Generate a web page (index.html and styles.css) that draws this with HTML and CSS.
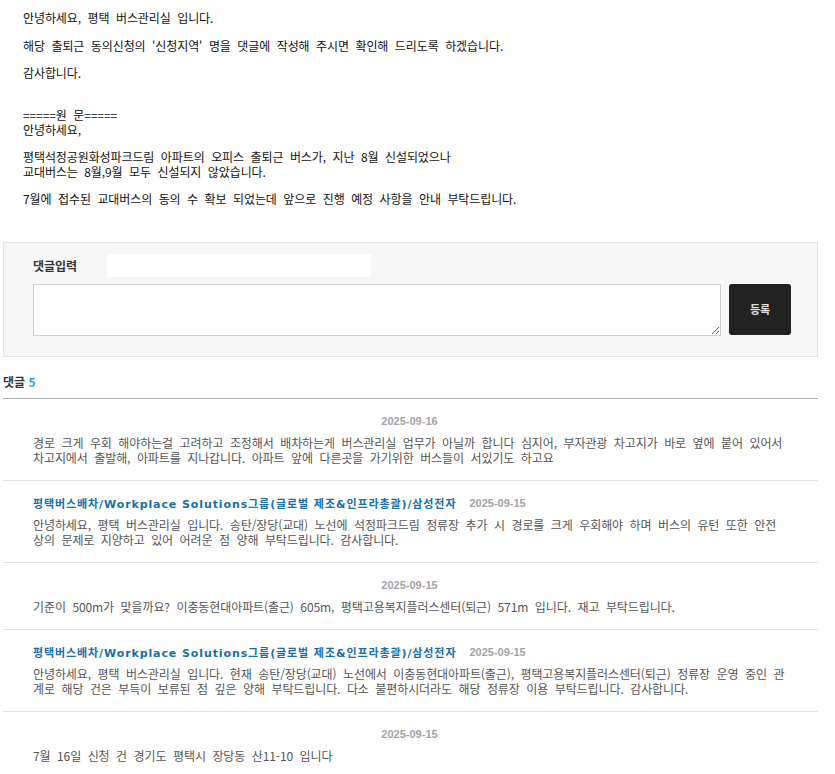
FILE: index.html
```html
<!DOCTYPE html>
<html lang="ko">

<head>
    <meta charset="UTF-8">
    <meta name="viewport" content="width=device-width, initial-scale=1.0">
    <title>출퇴근 동의신청</title>
    <link rel="stylesheet" href="styles.css">
</head>

<body>
    <div class="wrap">
        <div class="post-body">
            <p>안녕하세요, 평택 버스관리실 입니다.</p>
            <p>해당 출퇴근 동의신청의 '신청지역' 명을 댓글에 작성해 주시면 확인해 드리도록 하겠습니다.</p>
            <p>감사합니다.</p>
            <p><br>=====원 문=====<br>안녕하세요,</p>
            <p>평택석정공원화성파크드림 아파트의 오피스 출퇴근 버스가, 지난 8월 신설되었으나<br>교대버스는 8월,9월 모두 신설되지 않았습니다.</p>
            <p>7월에 접수된 교대버스의 동의 수 확보 되었는데 앞으로 진행 예정 사항을 안내 부탁드립니다.</p>
        </div>

        <form class="reply-form" onsubmit="return false">
            <div class="reply-top">
                <label for="reply-text">댓글입력</label>
                <input type="text" class="reply-name">
            </div>
            <div class="reply-row">
                <textarea id="reply-text"></textarea>
                <button type="submit">등록</button>
            </div>
        </form>

        <h3 class="cmt-head">댓글 <span class="cnt">5</span></h3>

        <ul class="cmt-list">
            <li class="cmt anon">
                <div class="cmt-info"><span class="date">2025-09-16</span></div>
                <div class="cmt-text">경로 크게 우회 해야하는걸 고려하고 조정해서 배차하는게 버스관리실 업무가 아닐까 합니다 심지어, 부자관광 차고지가 바로 옆에 붙어 있어서 차고지에서 출발해, 아파트를 지나갑니다. 아파트 앞에 다른곳을 가기위한 버스들이 서있기도 하고요</div>
            </li>
            <li class="cmt">
                <div class="cmt-info"><span class="name">평택버스배차/Workplace Solutions그룹(글로벌 제조&amp;인프라총괄)/삼성전자</span><span class="date">2025-09-15</span></div>
                <div class="cmt-text">안녕하세요, 평택 버스관리실 입니다. 송탄/장당(교대) 노선에 석정파크드림 정류장 추가 시 경로를 크게 우회해야 하며 버스의 유턴 또한 안전상의 문제로 지양하고 있어 어려운 점 양해 부탁드립니다. 감사합니다.</div>
            </li>
            <li class="cmt anon">
                <div class="cmt-info"><span class="date">2025-09-15</span></div>
                <div class="cmt-text">기준이 500m가 맞을까요? 이충동현대아파트(출근) 605m, 평택고용복지플러스센터(퇴근) 571m 입니다. 재고 부탁드립니다.</div>
            </li>
            <li class="cmt">
                <div class="cmt-info"><span class="name">평택버스배차/Workplace Solutions그룹(글로벌 제조&amp;인프라총괄)/삼성전자</span><span class="date">2025-09-15</span></div>
                <div class="cmt-text">안녕하세요, 평택 버스관리실 입니다. 현재 송탄/장당(교대) 노선에서 이충동현대아파트(출근), 평택고용복지플러스센터(퇴근) 정류장 운영 중인 관계로 해당 건은 부득이 보류된 점 깊은 양해 부탁드립니다. 다소 불편하시더라도 해당 정류장 이용 부탁드립니다. 감사합니다.</div>
            </li>
            <li class="cmt anon">
                <div class="cmt-info"><span class="date">2025-09-15</span></div>
                <div class="cmt-text">7월 16일 신청 건 경기도 평택시 장당동 산11-10 입니다</div>
            </li>
        </ul>
    </div>
</body>

</html>
```

FILE: styles.css
```css
html,
body {
    margin: 0;
    padding: 0;
    background: #fff;
    font-family: "Noto Sans CJK KR", "Noto Sans", sans-serif;
    font-size: 12px;
    color: #111;
}

* {
    box-sizing: border-box;
}

.wrap {
    width: 815px;
    margin-left: 3px;
}

/* POST BODY */
.post-body {
    padding: 11px 20px 0;
    letter-spacing: -0.1px;
    word-spacing: 3.3px;
}

.post-body p {
    margin: 0 0 13px;
    line-height: 14.5px;
}

/* REPLY FORM */
.reply-form {
    margin-top: 35px;
    padding: 11px 26px 20px 29px;
    background: #f7f7f7;
    border: 1px solid #e2e2e2;
}

.reply-top {
    display: flex;
    align-items: center;
    height: 23px;
}

.reply-top label {
    width: 74px;
    font-weight: bold;
    color: #333;
}

.reply-name {
    width: 264px;
    height: 23px;
    border: 0;
    background: #fff;
    outline: 0;
}

.reply-row {
    display: flex;
    gap: 8px;
    margin-top: 7px;
}

.reply-row textarea {
    width: 688px;
    height: 52px;
    margin: 0;
    border: 1px solid #cfcfcf;
    background: #fff;
    font-family: inherit;
}

.reply-row button {
    width: 62px;
    height: 51px;
    border: 0;
    border-radius: 3px;
    background: #222;
    color: #ddd;
    font-family: inherit;
    font-size: 11px;
    font-weight: bold;
}

/* COMMENTS */
.cmt-head {
    margin: 17px 0 0;
    padding-bottom: 8px;
    line-height: 16px;
    font-size: 12px;
    font-weight: bold;
    color: #333;
    border-bottom: 1px solid #b4b4b4;
}

.cmt-head .cnt {
    color: #2a9be0;
}

.cmt-list {
    list-style: none;
    margin: 0;
    padding: 0;
}

.cmt {
    padding: 14px 32px 15px 30px;
    border-bottom: 1px solid #e4e4e4;
}

.cmt-info {
    display: flex;
    align-items: center;
    gap: 13px;
    height: 16px;
    margin-bottom: 6px;
}

.cmt.anon .cmt-info {
    justify-content: center;
}

.cmt-info .name {
    font-family: "DejaVu Sans", "Noto Sans CJK KR", sans-serif;
    font-size: 11px;
    font-weight: bold;
    letter-spacing: 0.9px;
    color: #1a6ea8;
}

.cmt-info .date {
    font-family: "Liberation Sans", sans-serif;
    font-size: 11px;
    font-weight: bold;
    color: #a3a3a3;
}

.cmt-text {
    line-height: 15px;
    color: #555;
    letter-spacing: -0.1px;
    word-spacing: 3.3px;
}
```
